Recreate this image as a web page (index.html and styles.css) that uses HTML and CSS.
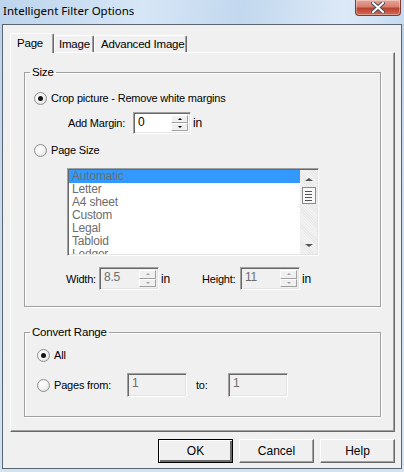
FILE: index.html
```html
<!DOCTYPE html>
<html lang="en">
<head>
    <meta charset="UTF-8">
    <title>Intelligent Filter Options</title>
    <link rel="stylesheet" href="styles.css">
</head>
<body>
    <div id="dialog">
        <div class="titlebar">
            <span class="title">Intelligent Filter Options</span>
            <div class="closeBtn">
                <svg width="14" height="11" viewBox="0 0 14 11">
                    <path d="M2 1 L12 10 M12 1 L2 10" stroke="#4a4f57" stroke-width="4" stroke-linecap="square"/>
                    <path d="M2 1 L12 10 M12 1 L2 10" stroke="#ffffff" stroke-width="2" stroke-linecap="square"/>
                </svg>
            </div>
        </div>

        <div class="client">
            <div class="tabs">
                <div class="tab active">Page</div>
                <div class="tab">Image</div>
                <div class="tab">Advanced Image</div>
            </div>

            <div class="panel">
                <fieldset class="group sizeGroup">
                    <legend>Size</legend>

                    <div class="row cropRow">
                        <span class="radio on"></span>
                        <span>Crop picture - Remove white margins</span>
                    </div>

                    <div class="row marginRow">
                        <span class="lbl marginLbl">Add Margin:</span>
                        <div class="edit marginEdit">
                            <span class="editText">0</span>
                            <div class="spin">
                                <span class="spinBtn up"></span>
                                <span class="spinBtn down"></span>
                            </div>
                        </div>
                        <span class="unit">in</span>
                    </div>

                    <div class="row pageRow">
                        <span class="radio"></span>
                        <span>Page Size</span>
                    </div>

                    <div class="listbox">
                        <div class="items">
                            <div class="item selected">Automatic</div>
                            <div class="item">Letter</div>
                            <div class="item">A4 sheet</div>
                            <div class="item">Custom</div>
                            <div class="item">Legal</div>
                            <div class="item">Tabloid</div>
                            <div class="item">Ledger</div>
                        </div>
                        <div class="scrollbar">
                            <span class="arrow arrowUp"></span>
                            <span class="thumb"><i></i><i></i><i></i><i></i></span>
                            <span class="arrow arrowDown"></span>
                        </div>
                    </div>

                    <div class="row dimRow">
                        <div class="dim">
                            <span class="lbl widthLbl">Width:</span>
                            <div class="edit dimEdit disabled">
                                <span class="editText">8.5</span>
                                <div class="spin">
                                    <span class="spinBtn up"></span>
                                    <span class="spinBtn down"></span>
                                </div>
                            </div>
                            <span class="unit">in</span>
                        </div>
                        <div class="dim">
                            <span class="lbl heightLbl">Height:</span>
                            <div class="edit dimEdit disabled">
                                <span class="editText">11</span>
                                <div class="spin">
                                    <span class="spinBtn up"></span>
                                    <span class="spinBtn down"></span>
                                </div>
                            </div>
                            <span class="unit">in</span>
                        </div>
                    </div>
                </fieldset>

                <fieldset class="group rangeGroup">
                    <legend>Convert Range</legend>

                    <div class="row allRow">
                        <span class="radio on"></span>
                        <span>All</span>
                    </div>

                    <div class="row pagesRow">
                        <span class="radio"></span>
                        <span class="lbl pagesLbl">Pages from:</span>
                        <div class="edit rangeEdit disabled"><span class="editText">1</span></div>
                        <span class="lbl toLbl">to:</span>
                        <div class="edit rangeEdit disabled"><span class="editText">1</span></div>
                    </div>
                </fieldset>
            </div>

            <div class="buttons">
                <button class="btn default">OK</button>
                <button class="btn">Cancel</button>
                <button class="btn">Help</button>
            </div>
        </div>
    </div>
</body>
</html>
```

FILE: styles.css
```css
*{
    box-sizing: border-box;
}
body{
    margin: 0;
    font-family: "Liberation Sans", Arial, sans-serif;
    font-size: 11px;
    letter-spacing: -0.2px;
    color: #000;
}
#dialog{
    width: 404px;
    height: 472px;
    display: flex;
    flex-direction: column;
    background: linear-gradient(180deg, #b9d1ea 0%, #c7dbf0 40%, #d3e3f4 100%);
}
.titlebar{
    height: 24px;
    flex: none;
    display: flex;
    align-items: flex-start;
    justify-content: space-between;
    background: linear-gradient(100deg, #bcd4ec 0%, #d6e6f6 35%, #c2d8ee 60%, #dce9f7 85%, #c6dbf0 100%);
}
.title{
    font-family: "Noto Sans", sans-serif;
    font-size: 11.5px;
    letter-spacing: 0;
    margin: 3px 0 0 3px;
    color: #000;
}
.closeBtn{
    width: 46px;
    height: 16px;
    margin-right: 3px;
    border: 1px solid #7c3a33;
    border-top: none;
    border-radius: 0 0 4px 4px;
    background: linear-gradient(180deg, #e8a598 0%, #d77e6f 45%, #b9422f 55%, #d26a55 100%);
    box-shadow: inset 0 0 0 1px rgba(255,255,255,0.35);
    display: flex;
    align-items: center;
    justify-content: center;
}
.client{
    flex: 1;
    margin: 0 2px 3px 2px;
    border: 1px solid #5c6470;
    background: #f0f0f0;
    display: flex;
    flex-direction: column;
}

/* tabs */
.tabs{
    display: flex;
    align-items: flex-end;
    height: 19px;
    margin: 8px 0 0 7px;
    position: relative;
    z-index: 1;
}
.tab{
    height: 17px;
    padding-left: 5px;
    line-height: 16px;
    font-size: 11.5px;
    white-space: nowrap;
    border-top: 1px solid #fff;
    border-left: 1px solid #fff;
    border-right: 1px solid #696969;
    box-shadow: inset -1px 0 #a0a0a0;
    border-radius: 2px 2px 0 0;
    background: #f0f0f0;
}
.tab.active{
    width: 44px;
    height: 20px;
    margin-bottom: -1px;
    padding-left: 6px;
    line-height: 19px;
}
.tab:nth-child(2){
    width: 40px;
    padding-left: 4px;
}
.tab:nth-child(3){
    width: 93px;
    padding-left: 6px;
}

/* panel */
.panel{
    width: 385px;
    height: 380px;
    margin-left: 7px;
    border-top: 1px solid #fff;
    border-left: 1px solid #fff;
    border-right: 1px solid #696969;
    border-bottom: 1px solid #696969;
    box-shadow: inset -1px -1px #a0a0a0;
    padding: 0 0 0 13px;
}
.group{
    margin: 0;
    padding: 0;
    width: 357px;
    border: 1px solid #a0a0a0;
    box-shadow: 1px 1px #fff, inset 1px 1px #fff;
    min-inline-size: 0;
}
.group legend{
    margin-left: 5px;
    padding: 0 2px;
    font-size: 11.5px;
    line-height: 14px;
}
.sizeGroup{
    margin-top: 12px;
    height: 242px;
}
.rangeGroup{
    margin-top: 18px;
    height: 92px;
}
.row{
    display: flex;
    align-items: center;
}
.cropRow{
    height: 20px;
    margin: 9px 0 0 9px;
    gap: 4px;
}
.marginRow{
    height: 22px;
    margin: 4px 0 0 43px;
}
.marginLbl{
    width: 65px;
}
.pageRow{
    height: 20px;
    margin: 6px 0 0 9px;
    gap: 4px;
}
.dimRow{
    height: 23px;
    margin: 11px 0 0 41px;
}
.dim{
    display: flex;
    align-items: center;
}
.dim:first-child{
    width: 136px;
}
.widthLbl{
    width: 33px;
}
.heightLbl{
    width: 38px;
}
.unit{
    margin-left: 2px;
    font-size: 12px;
}
.allRow{
    height: 20px;
    margin: 6px 0 0 12px;
    gap: 4px;
}
.pagesRow{
    height: 24px;
    margin: 8px 0 0 12px;
}
.pagesLbl{
    width: 73px;
    margin-left: 4px;
}
.toLbl{
    width: 41px;
    padding-left: 9px;
}

/* radio */
.radio{
    width: 13px;
    height: 13px;
    flex: none;
    border-radius: 50%;
    border: 1px solid #8f8f8f;
    background: radial-gradient(circle at 40% 40%, #fff 0%, #f4f4f4 45%, #d2d2d2 100%);
    display: flex;
    align-items: center;
    justify-content: center;
}
.radio.on::after{
    content: "";
    width: 5px;
    height: 5px;
    border-radius: 50%;
    background: #141414;
}

/* edit boxes */
.edit{
    display: flex;
    background: #fff;
    border-top: 1px solid #a0a0a0;
    border-left: 1px solid #a0a0a0;
    border-right: 1px solid #fff;
    border-bottom: 1px solid #fff;
    box-shadow: inset 1px 1px #696969, inset -1px -1px #e3e3e3;
    padding: 2px;
}
.edit.disabled{
    background: #f0f0f0;
    color: #6d6d6d;
}
.editText{
    flex: 1;
    padding-left: 2px;
    line-height: 14px;
    font-size: 12px;
}
.marginEdit{
    width: 58px;
    height: 22px;
}
.marginEdit .editText{
    color: #000;
}
.dimEdit{
    width: 60px;
    height: 23px;
}
.rangeEdit{
    width: 60px;
    height: 24px;
}
.spin{
    width: 17px;
    display: flex;
    flex-direction: column;
}
.spinBtn{
    flex: 1;
    background: #f0f0f0;
    border-top: 1px solid #fff;
    border-left: 1px solid #fff;
    border-right: 1px solid #a0a0a0;
    border-bottom: 1px solid #a0a0a0;
    display: flex;
    align-items: center;
    justify-content: center;
}
.spinBtn.up::after{
    content: "";
    border-left: 2px solid transparent;
    border-right: 2px solid transparent;
    border-bottom: 2px solid #000;
}
.spinBtn.down::after{
    content: "";
    border-left: 2px solid transparent;
    border-right: 2px solid transparent;
    border-top: 2px solid #000;
}
.disabled .spinBtn.up::after{
    border-bottom-color: #a0a0a0;
}
.disabled .spinBtn.down::after{
    border-top-color: #a0a0a0;
}

/* list box */
.listbox{
    width: 252px;
    height: 88px;
    margin: 8px 0 0 42px;
    display: flex;
    background: #fff;
    border-top: 1px solid #a0a0a0;
    border-left: 1px solid #a0a0a0;
    border-right: 1px solid #fff;
    border-bottom: 1px solid #fff;
    box-shadow: inset 1px 1px #696969, inset -1px -1px #e3e3e3;
    padding: 1px;
}
.items{
    flex: 1;
    overflow: hidden;
    font-size: 12px;
    color: #6d6d6d;
}
.item{
    height: 13px;
    line-height: 13px;
    padding-left: 3px;
}
.item.selected{
    background: #3399ff;
}
.scrollbar{
    width: 17px;
    display: flex;
    flex-direction: column;
    align-items: center;
    background: repeating-linear-gradient(45deg, #f4f4f4 0 1px, #e8e8e8 1px 2px);
}
.arrow{
    width: 0;
    height: 0;
    border-left: 4px solid transparent;
    border-right: 4px solid transparent;
}
.arrowUp{
    margin-top: 8px;
    border-bottom: 3px solid #555;
}
.arrowDown{
    margin-top: auto;
    margin-bottom: 7px;
    border-top: 3px solid #555;
}
.thumb{
    width: 14px;
    height: 17px;
    margin-top: 6px;
    border: 1px solid #8a8a8a;
    background: #f7f7f7;
    display: flex;
    flex-direction: column;
    justify-content: center;
    gap: 2px;
    padding-left: 2px;
}
.thumb i{
    display: block;
    width: 7px;
    height: 1px;
    background: #555;
}

/* buttons */
.buttons{
    display: flex;
    justify-content: flex-end;
    gap: 6px;
    margin: 7px 6px 0 0;
}
.btn{
    width: 75px;
    height: 24px;
    font-family: "Liberation Sans", Arial, sans-serif;
    font-size: 12px;
    color: #000;
    background: #f0f0f0;
    border-top: 1px solid #fff;
    border-left: 1px solid #fff;
    border-right: 1px solid #696969;
    border-bottom: 1px solid #696969;
    box-shadow: inset -1px -1px #a0a0a0;
    padding: 0;
}
.btn.default{
    border: 1px solid #000;
    box-shadow: inset 1px 1px #fff, inset -2px -2px #696969;
}
```
